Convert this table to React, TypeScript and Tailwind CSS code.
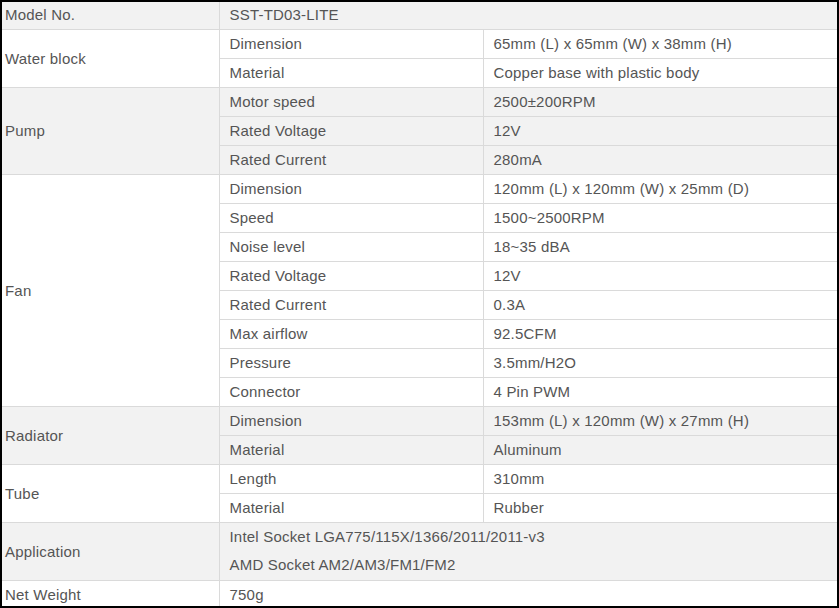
type Group = {
  label: string;
  shaded: boolean;
  rows: [string, string][];
};

const groups: Group[] = [
  { label: "Water block", shaded: false, rows: [["Dimension", "65mm (L) x 65mm (W) x 38mm (H)"], ["Material", "Copper base with plastic body"]] },
  { label: "Pump", shaded: true, rows: [["Motor speed", "2500±200RPM"], ["Rated Voltage", "12V"], ["Rated Current", "280mA"]] },
  {
    label: "Fan",
    shaded: false,
    rows: [
      ["Dimension", "120mm (L) x 120mm (W) x 25mm (D)"],
      ["Speed", "1500~2500RPM"],
      ["Noise level", "18~35 dBA"],
      ["Rated Voltage", "12V"],
      ["Rated Current", "0.3A"],
      ["Max airflow", "92.5CFM"],
      ["Pressure", "3.5mm/H2O"],
      ["Connector", "4 Pin PWM"],
    ],
  },
  { label: "Radiator", shaded: true, rows: [["Dimension", "153mm (L) x 120mm (W) x 27mm (H)"], ["Material", "Aluminum"]] },
  { label: "Tube", shaded: false, rows: [["Length", "310mm"], ["Material", "Rubber"]] },
];

const cell = "h-[29px] border-b border-[#dadada] p-0 pt-[2px] align-middle";

export default function App() {
  return (
    <div className="h-[608px] w-[839px] overflow-hidden border-2 border-black bg-white font-['Liberation_Sans',Arial,sans-serif] text-[15px] tracking-[0.2px] text-[#555555]">
      <table className="-mt-[2px] w-full table-fixed border-collapse">
        <colgroup>
          <col className="w-[217px]" />
          <col className="w-[264px]" />
          <col />
        </colgroup>
        <tbody>
          <tr className="bg-[#f2f2f2]">
            <td className={`${cell} border-r pl-[3px]`}>Model No.</td>
            <td colSpan={2} className={`${cell} pl-[10px]`}>SST-TD03-LITE</td>
          </tr>

          {groups.map((g) =>
            g.rows.map(([name, value], i) => (
              <tr key={`${g.label}-${name}-${i}`} className={g.shaded ? "bg-[#f2f2f2]" : "bg-white"}>
                {i === 0 && (
                  <td rowSpan={g.rows.length} className={`${cell} border-r pl-[3px]`}>
                    {g.label}
                  </td>
                )}
                <td className={`${cell} border-r pl-[10px]`}>{name}</td>
                <td className={`${cell} pl-[10px]`}>{value}</td>
              </tr>
            ))
          )}

          <tr className="bg-[#f2f2f2]">
            <td className="h-[57px] border-b border-r border-[#dadada] p-0 pt-[2px] pl-[3px] align-middle">Application</td>
            <td colSpan={2} className="h-[57px] border-b border-[#dadada] p-0 pl-[10px] align-middle">
              <div className="leading-[27px]">Intel Socket LGA775/115X/1366/2011/2011-v3</div>
              <div className="leading-[30px]">AMD Socket AM2/AM3/FM1/FM2</div>
            </td>
          </tr>

          <tr className="bg-white">
            <td className={`${cell} border-r pl-[3px]`}>Net Weight</td>
            <td colSpan={2} className={`${cell} pl-[10px]`}>750g</td>
          </tr>
        </tbody>
      </table>
    </div>
  );
}
